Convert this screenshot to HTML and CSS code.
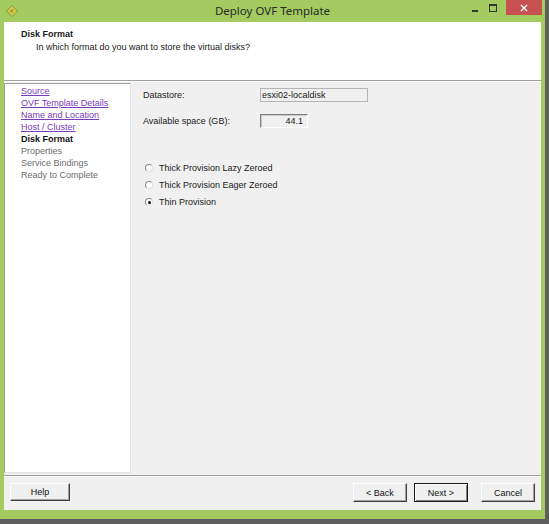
FILE: index.html
```html
<!DOCTYPE html>
<html>
<head>
<meta charset="utf-8">
<link rel="stylesheet" href="styles.css">
</head>
<body>
<div class="window">
  <div class="titlebar">
    <svg class="appicon" width="12" height="12" viewBox="0 0 12 12">
      <path d="M6 0.5 L11.5 6 L6 11.5 L0.5 6 Z" fill="#d9c94a" stroke="#6f8a2a" stroke-width="0.8"/>
      <path d="M4 7.5 L7.5 4 M4.5 5 L7 7.5" stroke="#6f8a2a" stroke-width="1"/>
    </svg>
    <div class="title">Deploy OVF Template</div>
    <div class="controls">
      <span class="ctl min"><span class="minbar"></span></span>
      <span class="ctl max"><span class="maxbox"></span></span>
      <span class="ctl close">
        <svg width="8" height="8" viewBox="0 0 8 8"><path d="M1 1 L7 7 M7 1 L1 7" stroke="#fff" stroke-width="1.4"/></svg>
      </span>
    </div>
  </div>
  <div class="client">
    <div class="header">
      <div class="h-title">Disk Format</div>
      <div class="h-sub">In which format do you want to store the virtual disks?</div>
    </div>
    <div class="etch"></div>
    <div class="main">
      <div class="nav">
        <a class="link">Source</a>
        <a class="link">OVF Template Details</a>
        <a class="link">Name and Location</a>
        <a class="link">Host / Cluster</a>
        <span class="current">Disk Format</span>
        <span class="disabled">Properties</span>
        <span class="disabled">Service Bindings</span>
        <span class="disabled">Ready to Complete</span>
      </div>
      <div class="content">
        <div class="row r1">
          <span class="label">Datastore:</span>
          <span class="field flat">esxi02-localdisk</span>
        </div>
        <div class="row r2">
          <span class="label">Available space (GB):</span>
          <span class="field inset">44.1</span>
        </div>
        <div class="radios">
          <div class="radio"><span class="dot"></span><span>Thick Provision Lazy Zeroed</span></div>
          <div class="radio"><span class="dot"></span><span>Thick Provision Eager Zeroed</span></div>
          <div class="radio"><span class="dot on"></span><span>Thin Provision</span></div>
        </div>
      </div>
    </div>
    <div class="etch bottom"></div>
    <div class="footer">
      <button class="btn help">Help</button>
      <div class="spacer"></div>
      <button class="btn back">&lt; Back</button>
      <button class="btn next">Next &gt;</button>
      <button class="btn cancel">Cancel</button>
    </div>
  </div>
</div>
</body>
</html>
```
FILE: styles.css
```css
html, body {
  margin: 0;
  padding: 0;
}
body {
  width: 549px;
  height: 524px;
  background: #5e5e5e;
  overflow: hidden;
  font-family: "Liberation Sans", Arial, sans-serif;
  font-size: 9px;
  color: #1a1a1a;
}
.window {
  width: 545px;
  height: 519px;
  background: #a3cb60;
  display: flex;
  flex-direction: column;
  box-sizing: border-box;
  padding: 0 4px 9px 4px;
}
.titlebar {
  height: 22px;
  display: flex;
  align-items: center;
  position: relative;
  flex: none;
}
.appicon {
  margin-left: 2px;
  margin-top: -1px;
}
.title {
  position: absolute;
  left: 0;
  right: 0;
  top: 3px;
  text-align: center;
  font-family: "Noto Sans", "Open Sans", sans-serif;
  font-size: 11.5px;
  color: #2a2a2a;
}
.controls {
  position: absolute;
  right: -1px;
  top: 0;
  display: flex;
  align-items: flex-start;
}
.ctl {
  display: flex;
  align-items: center;
  justify-content: center;
  height: 16px;
}
.min { width: 18px; }
.minbar {
  width: 6px;
  height: 2px;
  background: #333;
  margin-top: 5px;
}
.max { width: 18px; margin-right: 4px; }
.maxbox {
  width: 6px;
  height: 5px;
  border: 1px solid #333;
  border-top-width: 2px;
}
.close {
  width: 36px;
  height: 15px;
  background: #c75050;
}
.client {
  flex: 1;
  background: #f0f0f0;
  display: flex;
  flex-direction: column;
  min-height: 0;
}
.header {
  background: #fff;
  height: 58px;
  box-sizing: border-box;
  padding: 7px 0 0 17px;
  flex: none;
}
.h-title {
  font-weight: bold;
  line-height: 11px;
}
.h-sub {
  margin-top: 2px;
  padding-left: 15px;
  line-height: 11px;
}
.etch {
  height: 1px;
  border-top: 1px solid #a0a0a0;
  background: #fff;
  flex: none;
}
.main {
  flex: 1;
  display: flex;
  min-height: 0;
  padding-top: 1px;
  padding-bottom: 2px;
}
.nav {
  width: 127px;
  box-sizing: border-box;
  background: #fff;
  border-top: 1px solid #a0a0a0;
  border-left: 1px solid #a0a0a0;
  border-right: 1px solid #e3e3e3;
  border-bottom: 1px solid #e3e3e3;
  display: flex;
  flex-direction: column;
  padding: 1px 0 0 16px;
  line-height: 12px;
}
.link {
  color: #7a3bb8;
  text-decoration: underline;
}
.current {
  font-weight: bold;
  color: #111;
}
.disabled {
  color: #6d6d6d;
}
.content {
  flex: 1;
  padding: 4px 0 0 12px;
  display: flex;
  flex-direction: column;
}
.row {
  display: flex;
  align-items: center;
  height: 15px;
}
.r2 { margin-top: 11px; }
.label {
  width: 117px;
}
.field {
  height: 14px;
  box-sizing: border-box;
  line-height: 12px;
  display: block;
}
.flat {
  width: 108px;
  border: 1px solid #b4b4b4;
  background: #f0f0f0;
  padding-left: 1px;
}
.inset {
  width: 48px;
  border-top: 1px solid #808080;
  border-left: 1px solid #808080;
  border-right: 1px solid #fff;
  border-bottom: 1px solid #fff;
  box-shadow: inset 1px 1px 0 #c8c8c8;
  text-align: right;
  padding-right: 4px;
}
.radios {
  margin-top: 34px;
  display: flex;
  flex-direction: column;
  gap: 5px;
  padding-left: 2px;
}
.radio {
  display: flex;
  align-items: center;
  height: 12px;
}
.dot {
  width: 6px;
  height: 6px;
  border-radius: 50%;
  border: 1px solid #8a8a8a;
  border-right-color: #e0e0e0;
  border-bottom-color: #e0e0e0;
  background: #fff;
  margin-right: 6px;
  display: flex;
  align-items: center;
  justify-content: center;
}
.dot.on::after {
  content: "";
  width: 3px;
  height: 3px;
  border-radius: 50%;
  background: #111;
}
.footer {
  flex: none;
  height: 33px;
  display: flex;
  align-items: flex-start;
  padding: 6px 6px 0 6px;
  box-sizing: border-box;
}
.spacer { flex: 1; }
.btn {
  font-family: "Liberation Sans", Arial, sans-serif;
  font-size: 9px;
  color: #111;
  height: 19px;
  width: 54px;
  background: #f0f0f0;
  border: 1px solid;
  border-color: #fff #404040 #404040 #fff;
  box-shadow: inset -1px -1px 0 #a0a0a0;
  padding: 0;
  margin: 0;
}
.help { width: 60px; height: 18px; }
.back { margin-right: 7px; }
.next {
  border: 1px solid #1a1a1a;
  box-shadow: inset 1px 1px 0 #fff, inset -1px -1px 0 #808080;
  margin-right: 13px;
}
```
